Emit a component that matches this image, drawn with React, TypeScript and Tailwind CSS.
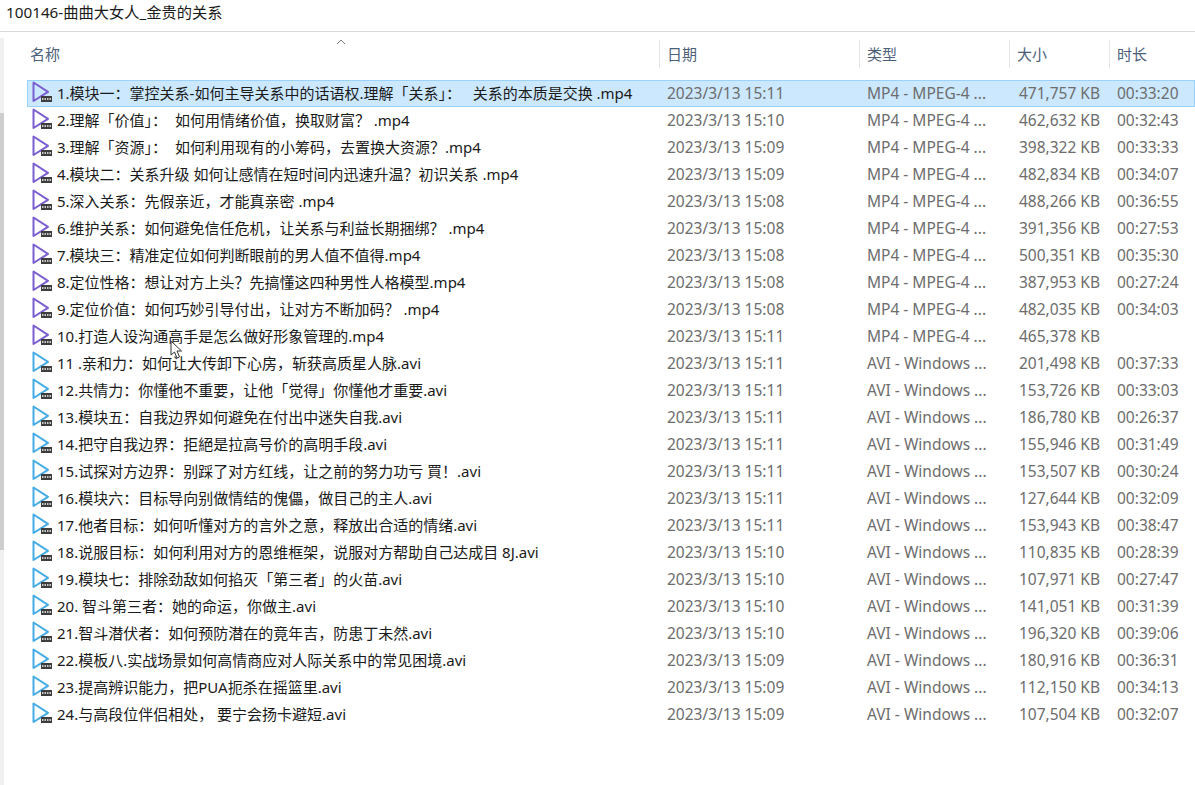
type Row = { name: string; date: string; type: "mp4" | "avi"; size: string; time: string };

// full-width punctuation, written as escapes: \uFF1A colon, \uFF0C comma, \uFF1F question mark, \uFF01 exclamation
const rows: Row[] = [
  { name: "1.模块一\uFF1A掌控关系-如何主导关系中的话语权.理解「关系」\uFF1A   关系的本质是交换 .mp4", date: "2023/3/13 15:11", type: "mp4", size: "471,757 KB", time: "00:33:20" },
  { name: "2.理解「价值」\uFF1A  如何用情绪价值\uFF0C换取财富\uFF1F .mp4", date: "2023/3/13 15:10", type: "mp4", size: "462,632 KB", time: "00:32:43" },
  { name: "3.理解「资源」\uFF1A  如何利用现有的小筹码\uFF0C去置换大资源\uFF1F.mp4", date: "2023/3/13 15:09", type: "mp4", size: "398,322 KB", time: "00:33:33" },
  { name: "4.模块二\uFF1A关系升级 如何让感情在短时间内迅速升温\uFF1F初识关系 .mp4", date: "2023/3/13 15:09", type: "mp4", size: "482,834 KB", time: "00:34:07" },
  { name: "5.深入关系\uFF1A先假亲近\uFF0C才能真亲密 .mp4", date: "2023/3/13 15:08", type: "mp4", size: "488,266 KB", time: "00:36:55" },
  { name: "6.维护关系\uFF1A如何避免信任危机\uFF0C让关系与利益长期捆绑\uFF1F .mp4", date: "2023/3/13 15:08", type: "mp4", size: "391,356 KB", time: "00:27:53" },
  { name: "7.模块三\uFF1A精准定位如何判断眼前的男人值不值得.mp4", date: "2023/3/13 15:08", type: "mp4", size: "500,351 KB", time: "00:35:30" },
  { name: "8.定位性格\uFF1A想让对方上头\uFF1F先搞懂这四种男性人格模型.mp4", date: "2023/3/13 15:08", type: "mp4", size: "387,953 KB", time: "00:27:24" },
  { name: "9.定位价值\uFF1A如何巧妙引导付出\uFF0C让对方不断加码\uFF1F .mp4", date: "2023/3/13 15:08", type: "mp4", size: "482,035 KB", time: "00:34:03" },
  { name: "10.打造人设沟通高手是怎么做好形象管理的.mp4", date: "2023/3/13 15:11", type: "mp4", size: "465,378 KB", time: "" },
  { name: "11 .亲和力\uFF1A如何让大传卸下心房\uFF0C斩获高质星人脉.avi", date: "2023/3/13 15:11", type: "avi", size: "201,498 KB", time: "00:37:33" },
  { name: "12.共情力\uFF1A你懂他不重要\uFF0C让他「觉得」你懂他才重要.avi", date: "2023/3/13 15:11", type: "avi", size: "153,726 KB", time: "00:33:03" },
  { name: "13.模块五\uFF1A自我边界如何避免在付出中迷失自我.avi", date: "2023/3/13 15:11", type: "avi", size: "186,780 KB", time: "00:26:37" },
  { name: "14.把守自我边界\uFF1A拒絕是拉高号价的高明手段.avi", date: "2023/3/13 15:11", type: "avi", size: "155,946 KB", time: "00:31:49" },
  { name: "15.试探对方边界\uFF1A别踩了对方红线\uFF0C让之前的努力功亏 買\uFF01.avi", date: "2023/3/13 15:11", type: "avi", size: "153,507 KB", time: "00:30:24" },
  { name: "16.模块六\uFF1A目标导向别做情结的傀儡\uFF0C做目己的主人.avi", date: "2023/3/13 15:11", type: "avi", size: "127,644 KB", time: "00:32:09" },
  { name: "17.他者目标\uFF1A如何听懂对方的言外之意\uFF0C释放出合适的情绪.avi", date: "2023/3/13 15:11", type: "avi", size: "153,943 KB", time: "00:38:47" },
  { name: "18.说服目标\uFF1A如何利用对方的恩维框架\uFF0C说服对方帮助自己达成目 8J.avi", date: "2023/3/13 15:10", type: "avi", size: "110,835 KB", time: "00:28:39" },
  { name: "19.模块七\uFF1A排除劲敌如何掐灭「第三者」的火苗.avi", date: "2023/3/13 15:10", type: "avi", size: "107,971 KB", time: "00:27:47" },
  { name: "20. 智斗第三者\uFF1A她的命运\uFF0C你做主.avi", date: "2023/3/13 15:10", type: "avi", size: "141,051 KB", time: "00:31:39" },
  { name: "21.智斗潜伏者\uFF1A如何预防潜在的竟年吉\uFF0C防患丁未然.avi", date: "2023/3/13 15:10", type: "avi", size: "196,320 KB", time: "00:39:06" },
  { name: "22.模板八.实战场景如何高情商应对人际关系中的常见困境.avi", date: "2023/3/13 15:09", type: "avi", size: "180,916 KB", time: "00:36:31" },
  { name: "23.提高辨识能力\uFF0C把PUA扼杀在摇篮里.avi", date: "2023/3/13 15:09", type: "avi", size: "112,150 KB", time: "00:34:13" },
  { name: "24.与高段位伴侣相处\uFF0C 要宁会扬卡避短.avi", date: "2023/3/13 15:09", type: "avi", size: "107,504 KB", time: "00:32:07" },
];

const FileIcon = ({ type }: { type: Row["type"] }) => {
  const color = type === "mp4" ? "#7b5fd0" : "#45ace6";
  return (
    <svg width="22" height="22" viewBox="0 0 22 22" className="shrink-0 mb-[3px]">
      <path d="M2.5 1.5 L2.5 20 L17 10.8 Z" fill="none" stroke={color} strokeWidth="2" strokeLinejoin="round" />
      <rect x="10" y="15" width="11" height="6" fill="#3d3d3d" />
      <path d="M11 18h9" stroke="#c8c8c8" strokeWidth="2" strokeDasharray="1.5 1" />
    </svg>
  );
};

const HeaderCell = ({ label, className }: { label: string; className: string }) => (
  <div className={`${className} h-[28px] flex items-center border-r border-[#e5e5e5] text-[15px] text-[#4c607a]`}>
    {label}
  </div>
);

const FileRow = ({ row, selected }: { row: Row; selected: boolean }) => (
  <div
    className={`flex h-[27px] items-center border ${
      selected ? "bg-[#cce8ff] border-[#99d1ff]" : "border-transparent"
    }`}
  >
    <div className="w-[632px] shrink-0 flex items-center pl-[3px] gap-[4px] whitespace-pre text-[15px] text-[#1a1a1a] overflow-hidden">
      <FileIcon type={row.type} />
      <span>{row.name}</span>
    </div>
    <div className="w-[200px] shrink-0 pl-[7px] text-[15.5px] text-[#6d6d6d]">{row.date}</div>
    <div className="w-[150px] shrink-0 pl-[7px] text-[15.5px] text-[#6d6d6d] whitespace-nowrap">
      {row.type === "mp4" ? "MP4 - MPEG-4 ..." : "AVI - Windows ..."}
    </div>
    <div className="w-[100px] shrink-0 pr-[10px] text-right text-[15.5px] text-[#6d6d6d] whitespace-nowrap">{row.size}</div>
    <div className="pl-[7px] text-[15.5px] text-[#6d6d6d] whitespace-nowrap">{row.time}</div>
  </div>
);

export default function App() {
  return (
    <div
      className="relative w-[1195px] h-[785px] overflow-hidden bg-white flex flex-col"
      style={{ fontFamily: '"Noto Sans", "Noto Sans CJK SC", sans-serif' }}
    >
      <div className="h-[32px] shrink-0 border-b border-[#d9d9d9] pl-[6px] pt-[1px] text-[15.25px] text-[#1a1a1a]">
        100146-曲曲大女人_金贵的关系
      </div>
      <div className="flex flex-1">
        <div className="w-[4px] shrink-0 pt-[6px] mr-[1px] flex flex-col">
          <div className="h-[75px] bg-[#f0f0f0]" />
          <div className="h-[437px] bg-[#cdcdcd]" />
          <div className="flex-1 bg-[#f0f0f0]" />
        </div>
        <div className="flex-1 pl-[22px]">
          <div className="relative flex pt-[8px] h-[48px]">
            <HeaderCell label="名称" className="w-[633px] pl-[3px]" />
            <HeaderCell label="日期" className="w-[200px] pl-[7px]" />
            <HeaderCell label="类型" className="w-[150px] pl-[7px]" />
            <HeaderCell label="大小" className="w-[100px] pl-[7px]" />
            <HeaderCell label="时长" className="w-[85px] pl-[7px] border-r-0" />
            <svg width="10" height="6" viewBox="0 0 10 6" className="absolute left-[309px] top-[7px]">
              <path d="M1 5 L5 1 L9 5" fill="none" stroke="#7a7a7a" strokeWidth="1" />
            </svg>
          </div>
          {rows.map((row, i) => (
            <FileRow key={row.name} row={row} selected={i === 0} />
          ))}
        </div>
      </div>
      <svg width="13" height="20" viewBox="0 0 13 20" className="absolute left-[170px] top-[340px]">
        <path d="M1 1 L1 15 L4.5 12 L7 18 L9.5 17 L7 11 L11.5 11 Z" fill="#fff" stroke="#333" strokeWidth="1" />
      </svg>
    </div>
  );
}
